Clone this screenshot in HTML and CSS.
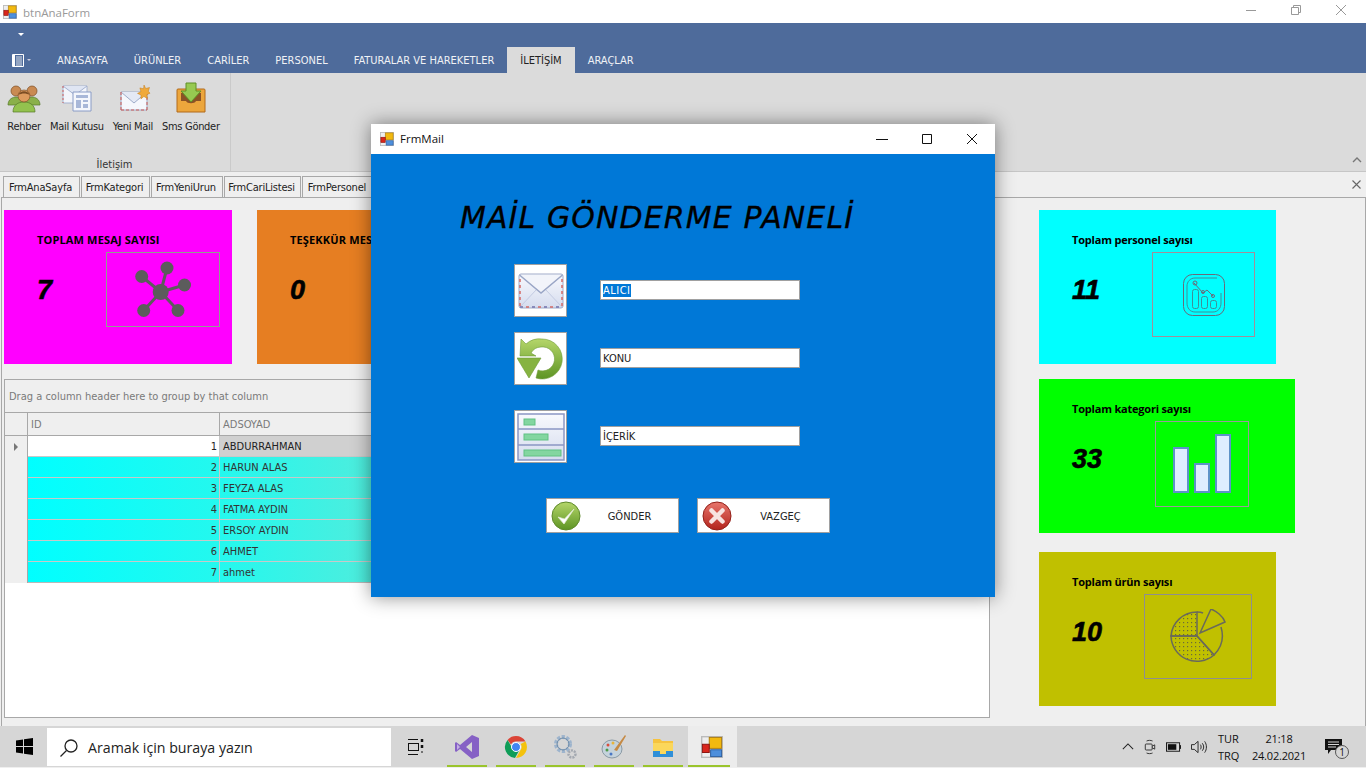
FILE: index.html
```html
<!DOCTYPE html>
<html lang="tr">
<head>
    <meta charset="UTF-8">
    <title>btnAnaForm</title>
    <link rel="stylesheet" href="styles.css">
</head>
<body>
    <svg class="defs" width="0" height="0">
        <defs>
            <symbol id="app-logo" viewBox="0 0 16 16">
                <rect x="0.5" y="0.5" width="15" height="15" fill="#eee" stroke="#bbb"/>
                <rect x="6" y="1" width="9" height="8" fill="#f2b90f" stroke="#a87a10" stroke-width="0.7"/>
                <rect x="1" y="6" width="5" height="6" fill="#d9261c" stroke="#8a1410" stroke-width="0.7"/>
                <rect x="7" y="10" width="8" height="5" fill="#4d8fdc" stroke="#2a5c9e" stroke-width="0.7"/>
            </symbol>
            <linearGradient id="green-ball" x1="0" y1="0" x2="0" y2="1">
                <stop offset="0" stop-color="#b5d66a"/>
                <stop offset="1" stop-color="#5d9424"/>
            </linearGradient>
            <linearGradient id="red-ball" x1="0" y1="0" x2="0" y2="1">
                <stop offset="0" stop-color="#e8766c"/>
                <stop offset="1" stop-color="#b2231c"/>
            </linearGradient>
            <linearGradient id="paper" x1="0" y1="0" x2="0" y2="1">
                <stop offset="0" stop-color="#f8f9fd"/>
                <stop offset="1" stop-color="#d5dcee"/>
            </linearGradient>
        </defs>
    </svg>

    <div class="app">
        <div class="titlebar">
            <svg class="app-icon" width="14" height="14"><use href="#app-logo"/></svg>
            <span class="title-text">btnAnaForm</span>
            <div class="win-btns">
                <svg width="12" height="12" viewBox="0 0 12 12"><path d="M1 6.500h10" stroke="#999" fill="none"/></svg>
                <svg width="12" height="12" viewBox="0 0 12 12"><path d="M1.500 3.500h7v7h-7zM3.500 3.500v-2h7v7h-2" stroke="#999" fill="none"/></svg>
                <svg width="12" height="12" viewBox="0 0 12 12"><path d="M1 1l10 10M11 1L1 11" stroke="#999" fill="none"/></svg>
            </div>
        </div>

        <div class="ribbon-head">
            <div class="qat"><span class="caret"></span></div>
            <div class="ribbon-tabs">
                <div class="file-btn">
                    <svg width="13" height="13" viewBox="0 0 13 13"><path d="M0.500 0.500h11v12h-11z" fill="#4e6b9b" stroke="#fff"/><path d="M1 1h2v11H1z" fill="#fff"/><path d="M4 3h6M4 5h6M4 7h6M4 9h6M4 11h6" stroke="#fff" stroke-width="0.800"/></svg>
                    <span class="mini-caret"></span>
                </div>
                <span class="rtab">ANASAYFA</span>
                <span class="rtab">ÜRÜNLER</span>
                <span class="rtab">CARİLER</span>
                <span class="rtab">PERSONEL</span>
                <span class="rtab">FATURALAR VE HAREKETLER</span>
                <span class="rtab active">İLETİŞİM</span>
                <span class="rtab">ARAÇLAR</span>
            </div>
        </div>

        <div class="ribbon-body">
            <div class="rgroup">
                <div class="rbtns">
                    <div class="rbtn">
                        <svg width="34" height="32" viewBox="0 -1 34 32">
                            <path d="M1 22c0-6 5-8 8-8s8 2 8 8zM17 22c0-6 5-8 8-8s8 2 8 8z" fill="#8ab04a" stroke="#56782a" stroke-width="0.7"/>
                            <circle cx="9" cy="8" r="5" fill="#c98a52" stroke="#7c4d24" stroke-width="0.7"/>
                            <circle cx="25" cy="8" r="5" fill="#c98a52" stroke="#7c4d24" stroke-width="0.7"/>
                            <path d="M6 29c0-7 5-10 11-10s11 3 11 10z" fill="#93c24e" stroke="#56782a" stroke-width="0.7"/>
                            <circle cx="17" cy="13" r="6" fill="#dd9a5e" stroke="#7c4d24" stroke-width="0.7"/>
                            <path d="M11.500 12c1-5 10-5 11 0-3-2-8-2-11 0z" fill="#7c4d24"/>
                        </svg>
                        <span>Rehber</span>
                    </div>
                    <div class="rbtn">
                        <svg width="30" height="32" viewBox="0 0 30 32">
                            <path d="M1 4h24v17H1z" fill="#f3f5fb" stroke="#a5b2d0"/>
                            <path d="M1 4l12 9L25 4" fill="#dfe5f3" stroke="#a5b2d0"/>
                            <path d="M1 4v17" stroke="#d0605c" stroke-dasharray="2 2"/>
                            <path d="M11 10h18v19H11z" fill="#f4f6fc" stroke="#8a9cc6"/>
                            <path d="M14 13h12v3H14zM14 18h5v8h-5zM21 18h5v2h-5zM21 22h5v4h-5z" fill="#a8b7d8"/>
                        </svg>
                        <span>Mail Kutusu</span>
                    </div>
                    <div class="rbtn rbtn-new">
                        <svg width="31" height="32" viewBox="0 -1 31 32">
                            <path d="M1 9h26v18H1z" fill="#f5f7fc" stroke="#9fadc9"/>
                            <path d="M1 9l13 11L27 9" fill="#e4e9f5" stroke="#9fadc9"/>
                            <path d="M1 27h26M1 9v18M27 9v18" stroke="#cf5a55" stroke-dasharray="3 2"/>
                            <path d="M24 2l1.700 3.500 3.800-1-1.200 3.700 1.700 2-3.100 1.400.5 3.900-3.500-2-3 2.400.1-3.900-3.500-1.600 3.400-1.800-1-3.700 3.700.9z" fill="#f0a93a" stroke="#c27c1c" stroke-width="0.5"/>
                        </svg>
                        <span>Yeni Mail</span>
                    </div>
                    <div class="rbtn">
                        <svg width="30" height="32" viewBox="0 0 30 32">
                            <path d="M2 7h26a1 1 0 0 1 1 1v22H1V8a1 1 0 0 1 1-1z" fill="#eca63c" stroke="#b26a1a"/>
                            <path d="M5 11h20v8h-5c-1 3-9 3-10 0H5z" fill="#8a5226"/>
                            <path d="M10 1h10v8h5L15 20 5 9h5z" fill="#97c951" stroke="#5f8f26"/>
                        </svg>
                        <span>Sms Gönder</span>
                    </div>
                </div>
                <div class="rgroup-label">İletişim</div>
            </div>
            <svg class="collapse" width="10" height="6" viewBox="0 0 10 6"><path d="M1 5l4-4 4 4" stroke="#777" stroke-width="1.400" fill="none"/></svg>
        </div>

        <div class="doc-tabs">
            <span class="dtab tab-ana">FrmAnaSayfa</span>
            <span class="dtab tab-kat">FrmKategori</span>
            <span class="dtab tab-yeni">FrmYeniUrun</span>
            <span class="dtab tab-cari">FrmCariListesi</span>
            <span class="dtab tab-pers">FrmPersonel</span>
            <svg class="doc-close" width="9" height="9" viewBox="0 0 9 9"><path d="M0.500 0.500l8 8M8.500 0.500l-8 8" stroke="#666" stroke-width="1.100" fill="none"/></svg>
        </div>

        <div class="content">
            <div class="left-side">
                <div class="top-cards">
                    <div class="card card-magenta">
                        <div class="card-label label-caps">TOPLAM MESAJ SAYISI</div>
                        <div class="card-row">
                            <span class="card-num">7</span>
                            <div class="card-pic pic-msg">
                                <svg width="60" height="60" viewBox="0 0 60 60">
                                    <path d="M27.700 32L8.700 16.500M27.700 32L34 8M27.700 32L51.500 25M27.700 32L10.700 50.500M27.700 32L45 50.500" stroke="#5c5c5c" stroke-width="3"/>
                                    <circle cx="27.700" cy="32" r="8" fill="#5c5c5c"/>
                                    <circle cx="8.700" cy="16.500" r="6.500" fill="#5c5c5c"/>
                                    <circle cx="34" cy="8" r="6.500" fill="#5c5c5c"/>
                                    <circle cx="51.500" cy="25" r="6.500" fill="#5c5c5c"/>
                                    <circle cx="10.700" cy="50.500" r="6.500" fill="#5c5c5c"/>
                                    <circle cx="45" cy="50.500" r="6.500" fill="#5c5c5c"/>
                                </svg>
                            </div>
                        </div>
                    </div>
                    <div class="card card-orange">
                        <div class="card-label label-caps">TEŞEKKÜR MESAJ</div>
                        <div class="card-row">
                            <span class="card-num">0</span>
                        </div>
                    </div>
                </div>

                <div class="grid-box">
                    <div class="group-panel">Drag a column header here to group by that column</div>
                    <div class="grid-row grid-head">
                        <div class="cell-ind"></div>
                        <div class="cell-id">ID</div>
                        <div class="cell-name">ADSOYAD</div>
                    </div>
                    <div class="grid-row row-first">
                        <div class="cell-ind"><span class="row-arrow"></span></div>
                        <div class="cell-id">1</div>
                        <div class="cell-name">ABDURRAHMAN</div>
                    </div>
                    <div class="grid-row row-data"><div class="cell-ind"></div><div class="cell-id">2</div><div class="cell-name">HARUN ALAS</div></div>
                    <div class="grid-row row-data"><div class="cell-ind"></div><div class="cell-id">3</div><div class="cell-name">FEYZA ALAS</div></div>
                    <div class="grid-row row-data"><div class="cell-ind"></div><div class="cell-id">4</div><div class="cell-name">FATMA AYDIN</div></div>
                    <div class="grid-row row-data"><div class="cell-ind"></div><div class="cell-id">5</div><div class="cell-name">ERSOY AYDIN</div></div>
                    <div class="grid-row row-data"><div class="cell-ind"></div><div class="cell-id">6</div><div class="cell-name">AHMET</div></div>
                    <div class="grid-row row-data"><div class="cell-ind"></div><div class="cell-id">7</div><div class="cell-name">ahmet</div></div>
                </div>
            </div>

            <div class="right-side">
                <div class="card card-cyan">
                    <div class="card-label">Toplam personel sayısı</div>
                    <div class="card-row">
                        <span class="card-num">11</span>
                        <div class="card-pic pic-pers">
                            <svg width="44" height="44" viewBox="0 0 44 44" fill="none" stroke="#3f8f99">
                                <rect x="1.500" y="1.500" width="41" height="41" rx="9" stroke="#6a6a7a"/>
                                <path d="M5 30V13c0-4 3-8 8-8h22M39 20v10c0 5-3 9-8 9H13c-5 0-8-4-8-9"/>
                                <rect x="10.500" y="16.500" width="6" height="19" rx="2"/>
                                <rect x="19.500" y="23.500" width="6" height="12" rx="2"/>
                                <rect x="28.500" y="27.500" width="6" height="8" rx="2"/>
                                <path d="M12 10l9 10 4-3 6 6" stroke="#6a6a7a"/>
                                <circle cx="13" cy="10" r="2" stroke="#6a6a7a"/>
                                <circle cx="21" cy="19" r="1.500" stroke="#6a6a7a"/>
                                <circle cx="31" cy="23" r="1.500" stroke="#6a6a7a"/>
                            </svg>
                        </div>
                    </div>
                </div>
                <div class="card card-green">
                    <div class="card-label">Toplam kategori sayısı</div>
                    <div class="card-row">
                        <span class="card-num">33</span>
                        <div class="card-pic pic-kat">
                            <svg width="60" height="60" viewBox="0 0 60 60">
                                <rect x="2" y="14" width="14" height="44" fill="#deeeff" stroke="#5d93c8" stroke-width="2"/>
                                <rect x="23" y="30" width="14" height="28" fill="#deeeff" stroke="#5d93c8" stroke-width="2"/>
                                <rect x="44" y="1" width="14" height="57" fill="#deeeff" stroke="#5d93c8" stroke-width="2"/>
                            </svg>
                        </div>
                    </div>
                </div>
                <div class="card card-olive">
                    <div class="card-label">Toplam ürün sayısı</div>
                    <div class="card-row">
                        <span class="card-num">10</span>
                        <div class="card-pic pic-urun">
                            <svg width="56" height="56" viewBox="0 0 56 56" fill="none" stroke="#6a6a5a" stroke-width="1.500">
                                <defs>
                                    <pattern id="dots" width="4" height="4" patternUnits="userSpaceOnUse"><rect x="1" y="1" width="1.200" height="1.200" fill="#6a6a3a" stroke="none"/></pattern>
                                </defs>
                                <path d="M27 27V3A26 26 0 0 0 1 27z" fill="url(#dots)"/>
                                <path d="M27 27H1A26 26 0 0 0 44 46z" fill="url(#dots)"/>
                                <path d="M27 3c2 0 4 0 6 1M51 18c3 10 1 20-7 28L27 27"/>
                                <path d="M30 24L41 0c5 2 12 7 14 13z"/>
                            </svg>
                        </div>
                    </div>
                </div>
            </div>
        </div>

        <div class="taskbar">
            <div class="start">
                <svg width="17" height="17" viewBox="0 0 17 17"><path d="M0 2.400L7 1.400V8H0zM8 1.200L17 0V8H8zM0 9h7v6.600L0 14.600zM8 9h9v8l-9-1.200z" fill="#000"/></svg>
            </div>
            <div class="search">
                <svg width="20" height="20" viewBox="0 0 20 20" fill="none" stroke="#222" stroke-width="1.300"><circle cx="12" cy="8" r="6"/><path d="M7.500 12.500L1.500 18.500"/></svg>
                <span>Aramak için buraya yazın</span>
            </div>
            <div class="task-view">
                <svg width="16" height="18" viewBox="0 0 16 18" fill="none" stroke="#111"><path d="M0 1.500h10M0 16.500h10"/><rect x="0.500" y="5.500" width="10" height="7"/><path d="M14 1v3M14 7v3" stroke-width="2.500"/><path d="M13 14h2"/></svg>
            </div>
            <div class="task-app">
                <svg width="24" height="24" viewBox="0 0 24 24"><path d="M17 0l7 3v18l-7 3-12-10-4 3-1-1V8l1-1 4 3zM17 7l-6 5 6 5z" fill="#8661c5"/><path d="M2 9v6l3-3z" fill="#fff" opacity="0.500"/></svg>
            </div>
            <div class="task-app">
                <svg width="24" height="24" viewBox="0 0 24 24">
                    <path d="M12 1a11 11 0 0 1 9.500 5.500H12a5.500 5.500 0 0 0-5 3L3.600 4.900A11 11 0 0 1 12 1z" fill="#db4437"/>
                    <path d="M21.500 6.500A11 11 0 0 1 12 23l4.700-8.200A5.500 5.500 0 0 0 16.700 9z" fill="#f4c20d"/>
                    <path d="M3.600 4.900L8 12.800a5.500 5.500 0 0 0 7 2.900L11 23A11 11 0 0 1 3.600 4.900z" fill="#0f9d58"/>
                    <circle cx="12" cy="12" r="4.500" fill="#4285f4" stroke="#fff"/>
                </svg>
            </div>
            <div class="task-app">
                <svg width="26" height="26" viewBox="0 0 26 26">
                    <circle cx="11" cy="10" r="7" fill="none" stroke="#9db4cd" stroke-width="4" stroke-dasharray="3 1.500"/>
                    <circle cx="11" cy="10" r="6" fill="none" stroke="#6c8aa8"/>
                    <circle cx="20" cy="20" r="3.500" fill="none" stroke="#a3a8b0" stroke-width="2.500" stroke-dasharray="2 1"/>
                </svg>
            </div>
            <div class="task-app">
                <svg width="26" height="26" viewBox="0 0 26 26">
                    <ellipse cx="11" cy="15" rx="10" ry="9" fill="#c5d3dc" stroke="#8a9aa5"/>
                    <circle cx="7" cy="11" r="1.500" fill="#d94f3d"/><circle cx="12" cy="9" r="1.500" fill="#e8b53a"/><circle cx="6" cy="16" r="1.500" fill="#4e9a4a"/><circle cx="10" cy="20" r="1.500" fill="#4a78c4"/>
                    <path d="M24 1l1 1-9 15-3-1z" fill="#c58a45"/>
                </svg>
            </div>
            <div class="task-app">
                <svg width="22" height="22" viewBox="0 0 22 22">
                    <path d="M1 3h7l2 2h11v16H1z" fill="#f6c33f"/>
                    <path d="M1 7h20v14H1z" fill="#fbd75b"/>
                    <path d="M1 15h20v6H1z" fill="#2f8fd8"/>
                    <path d="M8 15h6v3H8z" fill="#fbd75b"/>
                </svg>
            </div>
            <div class="task-app task-active">
                <svg width="22" height="22"><use href="#app-logo"/></svg>
            </div>

            <div class="tray">
                <svg width="12" height="7" viewBox="0 0 14 8"><path d="M1 7l6-6 6 6" stroke="#222" stroke-width="1.200" fill="none"/></svg>
                <svg width="12" height="18" viewBox="0 0 14 18" fill="none" stroke="#222"><rect x="1.500" y="5.500" width="8" height="7" rx="1"/><path d="M9.500 8l3-1.500v5l-3-1.500M3 2c2-1 5-1 7 0M3 16c2 1 5 1 7 0"/></svg>
                <svg width="15" height="10" viewBox="0 0 16 10"><rect x="0.500" y="0.500" width="14" height="9" fill="none" stroke="#111"/><rect x="2" y="2" width="9" height="6" fill="#111"/><rect x="15" y="3" width="1" height="4" fill="#111"/></svg>
                <svg width="16" height="14" viewBox="0 0 17 14" fill="none" stroke="#222"><path d="M0.500 4.500h3l4-3.500v12l-4-3.500h-3zM10 4.500c1 1.500 1 3.500 0 5M12 3c2 2.500 2 5.500 0 8M14.500 1c2.500 3.500 2.500 8.500 0 12"/></svg>
            </div>
            <div class="lang"><span>TUR</span><span>TRQ</span></div>
            <div class="clock"><span>21:18</span><span>24.02.2021</span></div>
            <div class="notify">
                <svg width="18" height="16" viewBox="0 0 18 16"><path d="M0 0h17v11H6l-3 4v-4H0z" fill="#111"/><path d="M3 3h11M3 5.500h11M3 8h8" stroke="#d6d6d6"/></svg>
                <span class="notify-badge">1</span>
            </div>
        </div>
    </div>

    <!-- the open child window, over the main form -->
    <div class="mail-window">
        <div class="mail-titlebar">
            <svg width="14" height="14"><use href="#app-logo"/></svg>
            <span class="mail-title-text">FrmMail</span>
            <div class="mail-win-btns">
                <svg width="12" height="12" viewBox="0 0 12 12"><path d="M0 6.500h12" stroke="#111" fill="none"/></svg>
                <svg width="12" height="12" viewBox="0 0 12 12"><path d="M1.500 1.500h9v9h-9z" stroke="#111" fill="none"/></svg>
                <svg width="12" height="12" viewBox="0 0 12 12"><path d="M1 1l10 10M11 1L1 11" stroke="#111" fill="none"/></svg>
            </div>
        </div>
        <div class="mail-body">
            <h1 class="mail-heading">MAİL GÖNDERME PANELİ</h1>

            <div class="mail-row row-alici">
                <div class="pic-box">
                    <svg width="46" height="36" viewBox="0 0 46 36">
                        <rect x="1" y="1" width="44" height="34" rx="2" fill="url(#paper)" stroke="#a0abc9"/>
                        <path d="M2 34L19 16M44 34L27 16" stroke="#c3cbe2"/>
                        <path d="M1.500 2L23 20 44.500 2" fill="#f2f4fa" stroke="#9aa6c6" stroke-width="1.500"/>
                        <path d="M2 34h42" stroke="#d36a66" stroke-width="1.500" stroke-dasharray="3 3"/>
                        <path d="M2 34h42" stroke="#6f8ccc" stroke-width="1.500" stroke-dasharray="3 9"/>
                        <path d="M2 6v27M44 6v27" stroke="#d36a66" stroke-width="1.500" stroke-dasharray="3 3"/>
                    </svg>
                </div>
                <div class="mail-input"><span class="selected">ALICI</span></div>
            </div>

            <div class="mail-row row-konu">
                <div class="pic-box">
                    <svg width="48" height="44" viewBox="0 0 48 44">
                        <path d="M25 2a20 20 0 1 1-6 39l2-8a12 12 0 1 0 3-23 12 12 0 0 0-10 6l5 3H3l1-17 5 5A20 20 0 0 1 25 2z" fill="url(#green-ball)" stroke="#6d9a36" stroke-width="0.600"/>
                        <path d="M0 21h24L12 41z" fill="#86b341" stroke="#6d9a36" stroke-width="0.600"/>
                    </svg>
                </div>
                <div class="mail-input">KONU</div>
            </div>

            <div class="mail-row row-icerik">
                <div class="pic-box">
                    <svg width="48" height="48" viewBox="0 0 48 48">
                        <rect x="1" y="1" width="46" height="46" fill="url(#paper)" stroke="#8a96c4" stroke-width="1.500"/>
                        <path d="M1 16h46M1 32h46" stroke="#8a96c4" stroke-width="1.500"/>
                        <rect x="7" y="6" width="11" height="6" fill="#83d6a0" stroke="#60c283"/>
                        <rect x="7" y="21" width="24" height="6" fill="#83d6a0" stroke="#60c283"/>
                        <rect x="7" y="37" width="37" height="6" fill="#83d6a0" stroke="#60c283"/>
                    </svg>
                </div>
                <div class="mail-input">İÇERİK</div>
            </div>

            <div class="mail-actions">
                <div class="mail-btn">
                    <svg width="30" height="30" viewBox="0 0 30 30">
                        <circle cx="15" cy="15" r="14" fill="url(#green-ball)" stroke="#5f8a2b"/>
                        <path d="M7 16l6 7 10-15-9.500 10z" fill="#fff" stroke="#dfe8cf" stroke-width="0.800"/>
                    </svg>
                    <span>GÖNDER</span>
                </div>
                <div class="mail-btn">
                    <svg width="30" height="30" viewBox="0 0 30 30">
                        <circle cx="15" cy="15" r="14" fill="url(#red-ball)" stroke="#932019"/>
                        <path d="M9.500 9.500l11 11M20.500 9.500l-11 11" stroke="#f7e3e1" stroke-width="4.500" stroke-linecap="round"/>
                    </svg>
                    <span>VAZGEÇ</span>
                </div>
            </div>
        </div>
    </div>
</body>
</html>
```

FILE: styles.css
```css
* {
    box-sizing: border-box;
}

html, body {
    margin: 0;
    padding: 0;
    height: 100%;
    overflow: hidden;
}

body {
    font-family: "DejaVu Sans Condensed", "DejaVu Sans", sans-serif;
    font-size: 11px;
    color: #222;
    position: relative;
}

.defs {
    position: absolute;
}

svg {
    display: block;
    flex: none;
}

.app {
    width: 1366px;
    height: 768px;
    display: flex;
    flex-direction: column;
    background-color: #efefef;
}

/* main window title */
.titlebar {
    height: 23px;
    background-color: #fff;
    display: flex;
    align-items: center;
    padding-left: 3px;
}

.title-text {
    margin: 1px 0 0 6px;
    font-family: "Open Sans", sans-serif;
    font-size: 11.5px;
    color: #999;
}

.win-btns {
    margin: 0 0 3px auto;
    display: flex;
    gap: 33px;
    padding-right: 19px;
}

/* ribbon */
.ribbon-head {
    height: 50px;
    background-color: #4e6b9b;
    display: flex;
    flex-direction: column;
}

.qat {
    height: 24px;
    padding: 10px 0 0 18px;
}

.caret {
    display: block;
    width: 0;
    height: 0;
    border-left: 3px solid transparent;
    border-right: 3px solid transparent;
    border-top: 3px solid #fff;
}

.ribbon-tabs {
    height: 26px;
    display: flex;
    align-items: stretch;
    padding-left: 12px;
}

.file-btn {
    width: 32px;
    display: flex;
    align-items: center;
    gap: 2px;
}

.mini-caret {
    width: 0;
    height: 0;
    border-left: 2px solid transparent;
    border-right: 2px solid transparent;
    border-top: 2px solid #ccd;
}

.rtab {
    padding: 0 13px;
    display: flex;
    align-items: center;
    color: #f0f2f6;
}

.rtab.active {
    background-color: #dbdbdb;
    color: #222;
}

.ribbon-body {
    height: 99px;
    background-color: #dbdbdb;
    border-bottom: 1px solid #c6c6c6;
    display: flex;
    justify-content: space-between;
}

.rgroup {
    width: 231px;
    border-right: 1px solid #cacaca;
    display: flex;
    flex-direction: column;
    padding: 9px 4px 0 3px;
}

.rbtns {
    display: flex;
    gap: 1px;
    height: 76px;
}

.rbtn {
    display: flex;
    flex-direction: column;
    align-items: center;
    padding: 0 4px;
    white-space: nowrap;
    letter-spacing: -0.3px;
}

.rbtn svg {
    margin-bottom: 6px;
}

.rbtn-new svg {
    margin-left: 5px;
}

.rgroup-label {
    text-align: center;
    color: #333;
}

.collapse {
    margin: 84px 4px 0 0;
}

/* document tabs */
.doc-tabs {
    height: 25px;
    display: flex;
    align-items: flex-end;
    gap: 1px;
    padding-left: 3px;
    position: relative;
    background-color: #efefef;
}

.dtab {
    height: 21px;
    padding-right: 2px;
    display: flex;
    align-items: center;
    justify-content: center;
    border: 1px solid #a8a8a8;
    border-bottom: none;
    background-color: #efefef;
    letter-spacing: -0.2px;
    white-space: nowrap;
}

.tab-ana {
    width: 77px;
}

.tab-kat {
    width: 69px;
}

.tab-yeni {
    width: 72px;
}

.tab-cari {
    width: 77px;
}

.tab-pers {
    width: 72px;
}

.doc-close {
    position: absolute;
    right: 5px;
    top: 8px;
}

.content {
    height: 530px;
    margin-left: 1px;
    border: 1px solid #a8a8a8;
    display: flex;
}

.left-side {
    width: 988px;
    padding: 12px 0 0 2px;
    display: flex;
    flex-direction: column;
}

.top-cards {
    display: flex;
    gap: 25px;
}

.right-side {
    padding: 12px 0 0 49px;
    display: flex;
    flex-direction: column;
}

/* stat cards */
.card {
    height: 154px;
    padding: 23px 0 0 33px;
    color: #000;
    flex: none;
}

.card-label {
    height: 13px;
    line-height: 13px;
    font-family: "Open Sans", sans-serif;
    font-weight: 700;
    font-size: 11px;
    letter-spacing: -0.2px;
    white-space: nowrap;
}

.label-caps {
    letter-spacing: 0.15px;
}

.card-row {
    display: flex;
    align-items: flex-start;
}

.card-num {
    width: 40px;
    font-family: "Liberation Sans", sans-serif;
    font-weight: bold;
    font-style: italic;
    font-size: 27px;
    line-height: 30px;
    margin-top: 29px;
    -webkit-text-stroke: 0.6px #000;
}

.card-pic {
    border: 1px solid #8f9f8f;
    display: flex;
    align-items: center;
    justify-content: center;
}

.card-magenta {
    width: 228px;
    background-color: #ff00ff;
}

.card-orange {
    width: 228px;
    background-color: #e67e22;
}

.card-cyan {
    width: 237px;
    background-color: #00ffff;
}

.card-green {
    width: 256px;
    margin-top: 15px;
    background-color: #00ff00;
}

.card-olive {
    width: 237px;
    margin-top: 19px;
    background-color: #c0c000;
}

.pic-msg {
    width: 114px;
    height: 75px;
    margin: 6px 0 0 29px;
}

.pic-pers {
    width: 103px;
    height: 85px;
    margin: 6px 0 0 40px;
    border-color: #a08f9a;
}

.pic-kat {
    width: 94px;
    height: 86px;
    margin: 6px 0 0 43px;
    border-color: #9a9a9a;
}

.pic-urun {
    width: 108px;
    height: 85px;
    margin: 6px 0 0 32px;
    border-color: #8f8f8f;
}

/* data grid */
.grid-box {
    width: 986px;
    height: 339px;
    margin-top: 15px;
    border: 1px solid #a8a8a8;
    background-color: #fff;
}

.group-panel {
    height: 33px;
    padding-left: 4px;
    line-height: 34px;
    color: #7a7a7a;
    background-color: #efefef;
    border-bottom: 1px solid #a8a8a8;
}

.grid-row {
    display: flex;
    height: 21px;
    line-height: 21px;
}

.cell-ind {
    width: 23px;
    background-color: #efefef;
    display: flex;
    align-items: center;
    justify-content: center;
    border-right: 1px solid #a8a8a8;
}

.cell-id {
    width: 192px;
    padding: 0 2px 0 3px;
    text-align: right;
    border-right: 1px solid #c8c8c8;
    border-bottom: 1px solid #c8c8c8;
}

.cell-name {
    width: 500px;
    padding-left: 3px;
    border-bottom: 1px solid #c8c8c8;
}

.grid-head {
    height: 23px;
    line-height: 23px;
    background-color: #efefef;
    color: #7a7a7a;
    border-bottom: 1px solid #a8a8a8;
}

.grid-head .cell-id {
    text-align: left;
    border-bottom: none;
    border-right-color: #a8a8a8;
}

.grid-head .cell-name {
    border-bottom: none;
}

.row-first .cell-id {
    background-color: #fff;
}

.row-first .cell-name {
    background-color: #d0d0d0;
}

.row-first .cell-ind,
.row-data .cell-ind {
    height: 21px;
}

.row-data .cell-id {
    background: linear-gradient(to right, #00ffff, #24f8ee);
    color: #333;
}

.row-data .cell-name {
    background: linear-gradient(to right, #24f8ee, #78e2cc 60%);
    color: #333;
}

.row-data:last-child .cell-id,
.row-data:last-child .cell-name {
    border-bottom-color: #b8b8b8;
}

.row-arrow {
    width: 0;
    height: 0;
    border-top: 4px solid transparent;
    border-bottom: 4px solid transparent;
    border-left: 4px solid #777;
}

/* taskbar */
.taskbar {
    height: 41px;
    margin-top: -1px;
    background-color: #d6d6d6;
    display: flex;
    align-items: center;
    font-family: "Open Sans", sans-serif;
    color: #111;
}

.start {
    width: 47px;
    padding-left: 16px;
}

.search {
    width: 344px;
    height: 38px;
    margin-top: 1px;
    padding: 1px 0 0 12px;
    background-color: #fff;
    display: flex;
    align-items: center;
    gap: 9px;
    font-size: 14.200px;
    color: #222;
}

.task-view {
    width: 52px;
    padding-left: 17px;
}

.task-app {
    width: 49px;
    height: 41px;
    padding-right: 2px;
    display: flex;
    align-items: center;
    justify-content: center;
    position: relative;
}

.task-app::after {
    content: "";
    position: absolute;
    left: 4px;
    right: 5px;
    bottom: 0;
    height: 2px;
    background-color: #9ac42c;
}

.task-active {
    background-color: #ececec;
}

.task-active::after {
    left: 0;
    right: 7px;
}

.tray {
    margin-left: auto;
    display: flex;
    align-items: center;
    gap: 10px;
}

.lang {
    width: 22px;
    margin-left: 11px;
    display: flex;
    flex-direction: column;
    font-size: 11px;
    line-height: 17px;
}

.clock {
    width: 78px;
    display: flex;
    flex-direction: column;
    align-items: center;
    font-size: 11px;
    letter-spacing: -0.2px;
    line-height: 17px;
}

.notify {
    width: 41px;
    margin-left: 7px;
    position: relative;
}

.notify-badge {
    position: absolute;
    left: 10px;
    top: 6px;
    width: 14px;
    height: 14px;
    border: 1px solid #555;
    border-radius: 50%;
    background-color: #d6d6d6;
    font-size: 10px;
    line-height: 12px;
    text-align: center;
}

/* FrmMail child window */
.mail-window {
    position: absolute;
    left: 371px;
    top: 124px;
    width: 624px;
    height: 473px;
    display: flex;
    flex-direction: column;
    box-shadow: 0 0 18px rgba(0, 0, 0, 0.45);
}

.mail-titlebar {
    height: 30px;
    background-color: #fff;
    display: flex;
    align-items: center;
    padding: 0 0 1px 9px;
}

.mail-title-text {
    margin-left: 6px;
    font-family: "Open Sans", sans-serif;
    font-size: 11.5px;
    color: #111;
}

.mail-win-btns {
    margin-left: auto;
    display: flex;
    gap: 33px;
    padding-right: 17px;
}

.mail-body {
    flex: 1;
    background-color: #0078d7;
    padding: 48px 0 0 89px;
}

.mail-heading {
    margin: 0;
    height: 32px;
    font-family: "DejaVu Sans", sans-serif;
    font-style: italic;
    font-weight: normal;
    font-size: 30px;
    line-height: 32px;
    letter-spacing: 1.100px;
    -webkit-text-stroke: 0.3px #000;
    color: #000;
    white-space: nowrap;
}

.mail-row {
    display: flex;
    align-items: center;
    gap: 33px;
    margin-left: 54px;
}

.row-alici {
    margin-top: 30px;
}

.row-konu {
    margin-top: 15px;
}

.row-icerik {
    margin-top: 25px;
}

.pic-box {
    width: 53px;
    height: 53px;
    background-color: #fff;
    border: 1px solid #a0a0a0;
    display: flex;
    align-items: center;
    justify-content: center;
}

.mail-input {
    width: 200px;
    height: 20px;
    margin-bottom: 1px;
    background-color: #fff;
    border: 1px solid #a0a0a0;
    padding-left: 2px;
    line-height: 20px;
    color: #222;
}

.selected {
    background-color: #0078d7;
    color: #fff;
    letter-spacing: 0.5px;
}

.mail-actions {
    display: flex;
    gap: 18px;
    margin: 35px 0 0 86px;
}

.mail-btn {
    width: 133px;
    height: 35px;
    background-color: #fff;
    border: 1px solid #a0a0a0;
    display: flex;
    align-items: center;
    padding-left: 4px;
}

.mail-btn span {
    flex: 1;
    padding-top: 1px;
    text-align: center;
    color: #222;
}
```
